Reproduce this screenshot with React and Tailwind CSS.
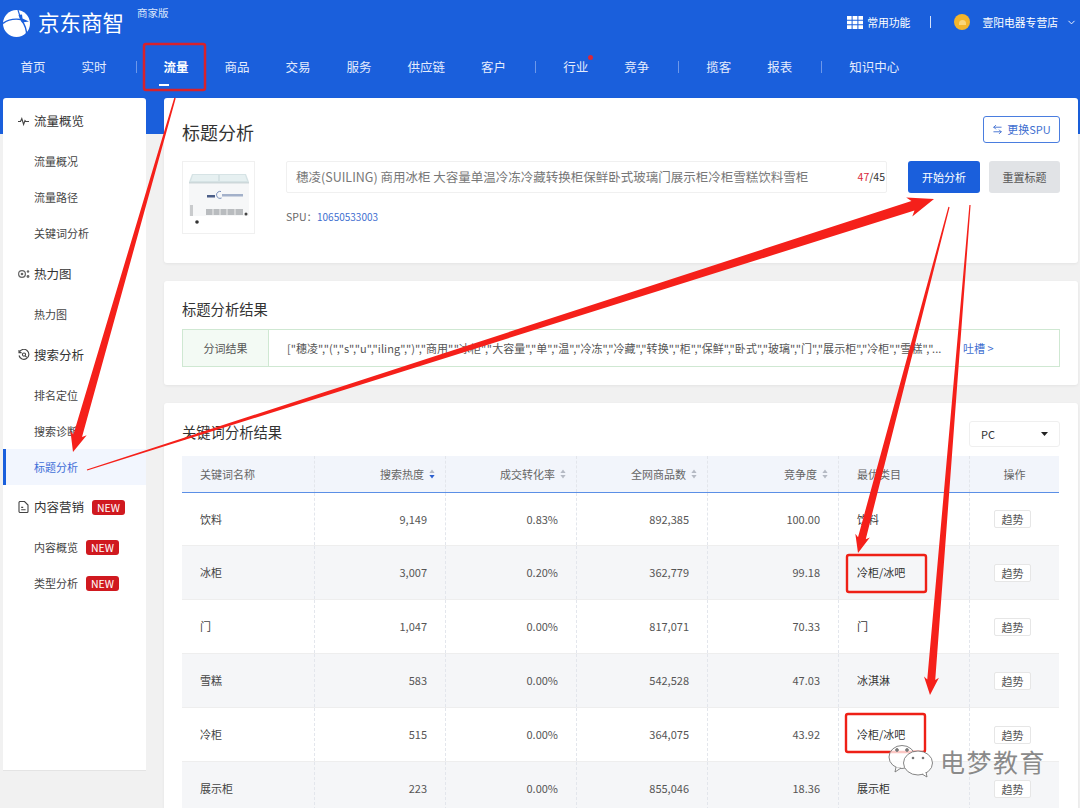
import React from 'react';
import { ArrowLeftRight, ChevronDown } from 'lucide-react';

const navItems = [
  { label: '首页' }, { label: '实时', sep: true }, { label: '流量', active: true }, { label: '商品' },
  { label: '交易' }, { label: '服务' }, { label: '供应链' }, { label: '客户', sep: true },
  { label: '行业', dot: true }, { label: '竞争', sep: true }, { label: '揽客' }, { label: '报表', sep: true },
  { label: '知识中心' },
];

const rows = [
  ['饮料', '9,149', '0.83%', '892,385', '100.00', '饮料'],
  ['冰柜', '3,007', '0.20%', '362,779', '99.18', '冷柜/冰吧'],
  ['门', '1,047', '0.00%', '817,071', '70.33', '门'],
  ['雪糕', '583', '0.00%', '542,528', '47.03', '冰淇淋'],
  ['冷柜', '515', '0.00%', '364,075', '43.92', '冷柜/冰吧'],
  ['展示柜', '223', '0.00%', '855,046', '18.36', '展示柜'],
];

const tokens = '["穗凌","(","s","u","iling",")","商用","冰柜","大容量","单","温","冷冻","冷藏","转换","柜","保鲜","卧式","玻璃","门","展示柜","冷柜","雪糕","...';

function NewTag() {
  return <span className="ml-2 rounded-[3px] bg-[#d0191f] px-[5px] text-[10.5px] leading-[15px] text-white">NEW</span>;
}

function PulseIcon() {
  return (
    <svg width="11" height="11" viewBox="0 0 11 11" fill="none" stroke="#444" strokeWidth="1.1">
      <path d="M0 5.5h2.5l1.3-3 1.8 6 1.4-4 .8 1H11" />
    </svg>
  );
}

function HeatIcon() {
  return (
    <svg width="12" height="11" viewBox="0 0 12 11" fill="#666">
      <circle cx="4" cy="5" r="3.4" fill="none" stroke="#666" strokeWidth="1.2" />
      <circle cx="4" cy="5" r="1.3" />
      <circle cx="10" cy="2.5" r="1.2" />
      <circle cx="10" cy="7.5" r="1.4" />
    </svg>
  );
}

function SearchIcon() {
  return (
    <svg width="12" height="12" viewBox="0 0 12 12" fill="none" stroke="#444" strokeWidth="1.1">
      <path d="M1.2 3.5A5 5 0 1 1 1 6.5" />
      <path d="M1 1v2.6h2.6" />
      <circle cx="6" cy="5.6" r="1.6" />
      <path d="M7.2 6.8l1.6 1.6" />
    </svg>
  );
}

function DocIcon() {
  return (
    <svg width="11" height="12" viewBox="0 0 11 12" fill="none" stroke="#444" strokeWidth="1.1">
      <path d="M1 1.5a1 1 0 0 1 1-1h4.5L10 4v6.5a1 1 0 0 1-1 1H2a1 1 0 0 1-1-1z" />
      <path d="M3.2 8.8h4.4M3.2 6.4h2" />
    </svg>
  );
}

function Logo() {
  return (
    <svg width="27" height="27" viewBox="0 0 27 27" className="ml-[3px] mt-[10px]">
      <circle cx="13.5" cy="13.5" r="13.5" fill="#fff" />
      <path d="M0 13.5C5 9.5 11 8.5 18 9.5" fill="none" stroke="#1a5fdc" strokeWidth="1.4" />
      <path d="M18 9.5C21.5 14 24 20 23.5 26" fill="none" stroke="#1a5fdc" strokeWidth="1.4" />
      <path d="M18 9.5L15 0" fill="none" stroke="#1a5fdc" strokeWidth="1.2" />
      <path d="M15.5 5l3.5-.5.5 4 6.5 3-7 1-2-3.5z" fill="#1a5fdc" />
    </svg>
  );
}

function SideHead({ icon, label, tag, className = '' }) {
  return (
    <div className={`flex h-[44px] items-center pl-[15px] text-[12.5px] text-[#333] ${className}`}>
      <span className="flex w-[16px] justify-start">{icon}</span>
      <span>{label}</span>
      {tag && <NewTag />}
    </div>
  );
}

function SideItem({ label, active, tag }) {
  return (
    <div className={`flex h-[36px] items-center text-[11px] ${active ? 'border-l-[3px] border-[#1a5fdc] bg-[#f2f6fe] pl-[28px] text-[#3f6fd8]' : 'pl-[31px] text-[#444]'}`}>
      <span>{label}</span>
      {tag && <NewTag />}
    </div>
  );
}

function Sort({ on }) {
  return (
    <svg width="6" height="10" viewBox="0 0 6 10" className="ml-[5px] inline-block align-[-1px]">
      <path d="M3 .5L5.6 4H.4z" fill="#b5bac4" />
      <path d="M3 9.5L.4 6h5.2z" fill={on ? '#2b5fd0' : '#b5bac4'} />
    </svg>
  );
}

// product photo stand-in: chest freezer with glass lids
function Fridge() {
  return (
    <svg width="62" height="52" viewBox="0 0 62 52">
      <path d="M1 10L4 2h54l3 8z" fill="#d6e3e5" />
      <path d="M5 3h25v6H3zM32 3h25l2 6H32z" fill="#e6f0f1" />
      <rect x="1" y="10" width="60" height="34" fill="#f6f7f8" />
      <rect x="1" y="10" width="60" height="1.5" fill="#cdd8da" />
      <rect x="19" y="23" width="8" height="2.5" fill="#4c5f88" />
      <path d="M33 19.5a3.5 3.5 0 1 0 .6 6.5" fill="none" stroke="#6a83b4" strokeWidth="0.9" />
      <rect x="34" y="22" width="21" height="2.5" fill="#a3b1ca" />
      <rect x="18" y="37" width="37" height="6" fill="#b9bcbf" />
      <path d="M25 37v6M32 37v6M39 37v6M47 37v6" stroke="#eee" strokeWidth="1" />
      <rect x="2" y="33" width="3" height="11" fill="#c9cbcd" />
      <circle cx="9" cy="50" r="1.8" fill="#333" />
      <circle cx="58" cy="42" r="1.5" fill="#444" />
    </svg>
  );
}

function Arrow({ x1, y1, x2, y2, w0, w1, hw, hl }) {
  const len = Math.hypot(x2 - x1, y2 - y1);
  const ux = (x2 - x1) / len;
  const uy = (y2 - y1) / len;
  const nx = -uy;
  const ny = ux;
  const at = (d, s) => `${x1 + ux * d + nx * s},${y1 + uy * d + ny * s}`;
  const pts = [
    at(0, w0 / 2), at(len - hl * 0.85, w1 / 2), at(len - hl, hw / 2), at(len, 0),
    at(len - hl, -hw / 2), at(len - hl * 0.85, -w1 / 2), at(0, -w0 / 2),
  ];
  return <polygon points={pts.join(' ')} fill="#f5201a" />;
}

function Annotations() {
  return (
    <svg width="1080" height="808" viewBox="0 0 1080 808" className="pointer-events-none absolute left-0 top-0">
      <rect x="144" y="44" width="61" height="46" rx="2" fill="none" stroke="#d6222c" strokeWidth="2.5" />
      <rect x="847" y="555" width="79" height="37" rx="2" fill="none" stroke="#ee2016" strokeWidth="2.4" />
      <rect x="846" y="714" width="79" height="38" rx="2" fill="none" stroke="#ee2016" strokeWidth="2.4" />
      <Arrow x1={175} y1={98} x2={73} y2={452} w0={1.5} w1={9} hw={17} hl={20} />
      <Arrow x1={87} y1={470} x2={934} y2={199} w0={1.2} w1={10} hw={20} hl={26} />
      <Arrow x1={949} y1={207} x2={858} y2={553} w0={1.2} w1={8} hw={15} hl={18} />
      <Arrow x1={970} y1={205} x2={930} y2={695} w0={1.2} w1={8} hw={15} hl={18} />
    </svg>
  );
}

function Watermark() {
  return (
    <div className="absolute left-[888px] top-[744px] flex items-center">
      <svg width="46" height="34" viewBox="0 0 46 34" fill="#fff" stroke="#777" strokeWidth="0.9">
        <ellipse cx="14" cy="13" rx="13" ry="11.5" fillOpacity="0.75" />
        <path d="M8 23l-1 5 6-4" fillOpacity="0.75" />
        <circle cx="9" cy="6" r="1.4" fill="#777" />
        <circle cx="19" cy="6" r="1.4" fill="#777" />
        <ellipse cx="30" cy="19" rx="14.5" ry="12" />
        <path d="M34 30l5 3-1-5" />
        <circle cx="25" cy="14" r="1.3" fill="#777" stroke="none" />
        <circle cx="35" cy="14" r="1.3" fill="#777" stroke="none" />
      </svg>
      <span className="ml-[6px] text-[25px] leading-none tracking-[1.5px] text-[#8a8a8a] [text-shadow:0_0_2px_#fff]">电梦教育</span>
    </div>
  );
}

export default function App() {
  return (
    <div className="relative h-[808px] w-[1080px] overflow-hidden bg-[#f1f1f1] font-['Noto_Sans_CJK_SC',sans-serif]">
      <header className="h-[134px] bg-[#1a5fdc] text-white">
        <div className="flex h-[44px] items-start">
          <Logo />
          <span className="ml-[8px] mt-[7px] text-[21.5px] leading-[30px] text-white">京东商智</span>
          <span className="ml-[13px] mt-[5px] text-[10.5px] leading-[16px] text-[#dbe6fb]">商家版</span>
          <div className="ml-auto mr-[3px] mt-[14px] flex items-center text-[10.8px] leading-[16px]">
            <svg width="16" height="13" viewBox="0 0 16 13" fill="#fff">
              <path d="M0 0h4.6v3.7H0zM5.6 0h4.8v3.7H5.6zM11.4 0H16v3.7h-4.6zM0 4.7h4.6v3.6H0zM5.6 4.7h4.8v3.6H5.6zM11.4 4.7H16v3.6h-4.6zM0 9.3h4.6V13H0zM5.6 9.3h4.8V13H5.6zM11.4 9.3H16V13h-4.6z" />
            </svg>
            <span className="ml-[4px]">常用功能</span>
            <span className="ml-[20px] h-[12px] w-px bg-[#d5e2fb]" />
            <span className="ml-[23px] flex h-[16px] w-[16px] items-center justify-center rounded-full bg-[#f4b52c]">
              <span className="h-[5px] w-[7px] rounded-t-full bg-[#fbd67a]" />
            </span>
            <span className="ml-[12px]">壹阳电器专营店</span>
            <ChevronDown size={11} className="ml-[8px]" />
          </div>
        </div>
        <nav className="flex h-[46px] items-center pl-[2.5px] text-[12.5px] text-[#e4ecfc]">
          {navItems.map((item) => (
            <React.Fragment key={item.label}>
              <div className={`relative flex h-[46px] items-center px-[18px] ${item.active ? 'font-bold text-white' : ''}`}>
                {item.label}
                {item.active && <span className="absolute bottom-[4px] left-[13.5px] h-[2px] w-[10px] bg-white" />}
                {item.dot && <span className="absolute right-[13.5px] top-[11px] h-[5px] w-[5px] rounded-full bg-[#d9273a]" />}
              </div>
              {item.sep && <span className="ml-[11px] mr-[9px] h-[12px] w-px bg-[#6d98ea]" />}
            </React.Fragment>
          ))}
        </nav>
      </header>

      <div className="-mt-[36px] flex items-start">
        <aside className="ml-[3px] h-[673px] w-[143px] rounded-t-[3px] border-b border-[#e4e4e4] bg-white pt-px">
          <SideHead icon={<PulseIcon />} label="流量概览" />
          <SideItem label="流量概况" />
          <SideItem label="流量路径" />
          <SideItem label="关键词分析" />
          <SideHead icon={<HeatIcon />} label="热力图" className="mt-px" />
          <SideItem label="热力图" />
          <SideHead icon={<SearchIcon />} label="搜索分析" className="mt-px" />
          <SideItem label="排名定位" />
          <SideItem label="搜索诊断" />
          <SideItem label="标题分析" active />
          <SideHead icon={<DocIcon />} label="内容营销" tag />
          <SideItem label="内容概览" tag />
          <SideItem label="类型分析" tag />
        </aside>

        <main className="ml-[18px] flex w-[914px] flex-col gap-[18px]">
          <section className="h-[165px] rounded-[3px] bg-white px-[18px] pt-[18px] shadow-[0_1px_3px_rgba(0,0,0,0.06)]">
            <div className="flex h-[27px] items-center justify-between">
              <h1 className="mt-[6px] text-[18px] font-normal text-[#333]">标题分析</h1>
              <button className="flex h-[27px] w-[77px] items-center justify-center gap-[4px] rounded-[3px] border border-[#4a7ddf] text-[11px] text-[#3f6fd0]">
                <ArrowLeftRight size={11} />更换SPU
              </button>
            </div>
            <div className="mt-[18px] flex items-start">
              <div className="flex h-[73px] w-[73px] items-center justify-center border border-[#f0f0f0]">
                <Fridge />
              </div>
              <div className="ml-[31px] flex-1">
                <div className="flex items-center">
                  <div className="flex h-[32px] w-[601px] items-center justify-between rounded-[2px] border border-[#f0f0f0] pl-[9px] pr-px text-[12.5px] text-[#777]">
                    <span>穗凌(SUILING) 商用冰柜 大容量单温冷冻冷藏转换柜保鲜卧式玻璃门展示柜冷柜雪糕饮料雪柜</span>
                    <span className="text-[10.5px]"><span className="text-[#d9273a]">47</span><span className="text-[#333]">/45</span></span>
                  </div>
                  <button className="ml-[21px] h-[32px] w-[72px] rounded-[3px] bg-[#1a5fdc] text-[11px] text-white">开始分析</button>
                  <button className="ml-[9px] h-[32px] w-[71px] rounded-[3px] bg-[#e1e3e6] text-[11px] text-[#555]">重置标题</button>
                </div>
                <div className="mt-[16px] text-[10.5px] leading-[16px] text-[#666]">
                  SPU：<span className="text-[10px] text-[#3f6fd0]">10650533003</span>
                </div>
              </div>
            </div>
          </section>

          <section className="h-[104px] rounded-[3px] bg-white px-[18px] pt-[18px] shadow-[0_1px_3px_rgba(0,0,0,0.06)]">
            <h2 className="text-[14.3px] font-normal leading-[20px] text-[#333]">标题分析结果</h2>
            <div className="mt-[10px] flex h-[38px] items-center border border-[#cfe8d2] text-[11px]">
              <div className="flex h-full w-[86px] items-center justify-center border-r border-[#cfe8d2] bg-[#f3faf4] text-[#555]">分词结果</div>
              <div className="ml-[18px] w-[656px] overflow-hidden whitespace-nowrap tracking-[0.04px] text-[#555]">{tokens}</div>
              <span className="ml-[20px] text-[#3f6fd0]">吐槽 &gt;</span>
            </div>
          </section>

          <section className="h-[420px] rounded-[3px] bg-white px-[18px] pt-[18px] shadow-[0_1px_3px_rgba(0,0,0,0.06)]">
            <div className="flex h-[26px] items-center justify-between">
              <h2 className="mb-[5px] text-[14.3px] font-normal leading-[20px] text-[#333]">关键词分析结果</h2>
              <div className="flex h-[26px] w-[91px] items-center justify-between rounded-[3px] border border-[#efefef] px-[11px] text-[11px] text-[#333]">
                PC
                <svg width="7" height="4" viewBox="0 0 7 4"><path d="M0 0h7L3.5 4z" fill="#222" /></svg>
              </div>
            </div>
            <div className="mt-[9px] flex h-[37px] w-[877px] border-b border-[#5b8fe6] bg-[#f2f5fb] text-[11px] text-[#666]">
              <div className="flex w-[133px] items-center border-r border-dashed border-[#e3e6ec] pl-[18px]">关键词名称</div>
              <div className="flex w-[131px] items-center justify-end border-r border-dashed border-[#e3e6ec] pr-[10px]">搜索热度<Sort on /></div>
              <div className="flex w-[131px] items-center justify-end border-r border-dashed border-[#e3e6ec] pr-[10px]">成交转化率<Sort /></div>
              <div className="flex w-[131px] items-center justify-end border-r border-dashed border-[#e3e6ec] pr-[10px]">全网商品数<Sort /></div>
              <div className="flex w-[131px] items-center justify-end border-r border-dashed border-[#e3e6ec] pr-[10px]">竞争度<Sort /></div>
              <div className="flex w-[131px] items-center border-r border-dashed border-[#e3e6ec] pl-[18px]">最优类目</div>
              <div className="flex w-[89px] items-center justify-center">操作</div>
            </div>
            {rows.map((r, i) => (
              <div key={r[0]} className={`flex w-[877px] border-b border-[#eeeeee] text-[11px] text-[#555] ${i === 0 ? 'h-[53px]' : 'h-[54px]'} ${i % 2 ? 'bg-[#f5f6f8]' : 'bg-white'}`}>
                <div className="flex w-[133px] items-center border-r border-dashed border-[#e3e6ec] pl-[18px] text-[#444]">{r[0]}</div>
                <div className="flex w-[131px] items-center justify-end border-r border-dashed border-[#e3e6ec] pr-[18px]">{r[1]}</div>
                <div className="flex w-[131px] items-center justify-end border-r border-dashed border-[#e3e6ec] pr-[18px]">{r[2]}</div>
                <div className="flex w-[131px] items-center justify-end border-r border-dashed border-[#e3e6ec] pr-[18px]">{r[3]}</div>
                <div className="flex w-[131px] items-center justify-end border-r border-dashed border-[#e3e6ec] pr-[18px]">{r[4]}</div>
                <div className="flex w-[131px] items-center border-r border-dashed border-[#e3e6ec] pl-[18px] text-[#333]">{r[5]}</div>
                <div className="flex w-[89px] items-center justify-center">
                  <button className="h-[18px] w-[37px] -translate-x-[2px] rounded-[2px] border border-[#e6e6e6] bg-white text-[11px] leading-[16px] text-[#555]">趋势</button>
                </div>
              </div>
            ))}
          </section>
        </main>
      </div>

      <Annotations />
      <Watermark />
    </div>
  );
}
